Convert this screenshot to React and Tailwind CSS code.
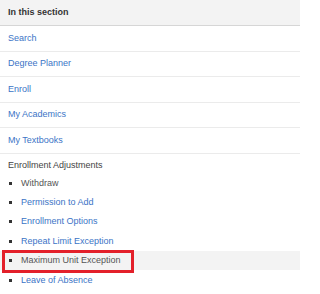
const topLinks = ['Search', 'Degree Planner', 'Enroll', 'My Academics', 'My Textbooks']

const subItems = [
  { label: 'Withdraw', link: false },
  { label: 'Permission to Add', link: true },
  { label: 'Enrollment Options', link: true },
  { label: 'Repeat Limit Exception', link: true },
  { label: 'Maximum Unit Exception', link: false, active: true },
  { label: 'Leave of Absence', link: true },
]

export default function App() {
  return (
    <div className="w-[300px] h-[294px] bg-white text-[9px] leading-[11px] overflow-hidden" style={{ fontFamily: '"Liberation Sans", Arial, sans-serif' }}>
      {/* Header */}
      <div className="h-[26px] bg-[#f3f3f3] border-b border-[#d6d6d6] flex items-center pl-[8px] font-bold text-[#333]">
        In this section
      </div>

      {/* Liens principaux */}
      {topLinks.map(label => (
        <div key={label} className="h-[25.5px] border-b border-[#ebebeb] flex items-center pl-[8px] text-[#3b74c6]">
          {label}
        </div>
      ))}

      {/* Sous-section */}
      <div className="h-[20px] flex items-center pl-[8px] pt-[3px] text-[#444]">
        Enrollment Adjustments
      </div>
      <ul>
        {subItems.map(item => (
          <li
            key={item.label}
            className={`relative h-[19.4px] flex items-center pl-[9px] ${item.active ? 'bg-[#f3f3f3]' : ''}`}
          >
            <span className="w-[3px] h-[3px] bg-[#333] mr-[9px]"></span>
            <span className={item.link ? 'text-[#3b74c6]' : 'text-[#555]'}>{item.label}</span>
            {item.active && (
              <span className="absolute left-[2px] top-[-1px] w-[132px] h-[23px] border-[3px] border-[#e3202a]"></span>
            )}
          </li>
        ))}
      </ul>
    </div>
  )
}
